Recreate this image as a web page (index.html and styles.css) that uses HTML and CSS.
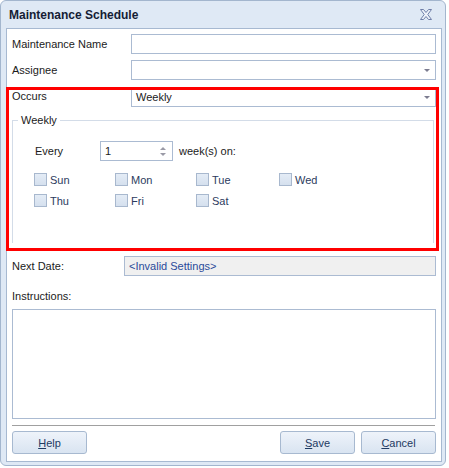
FILE: index.html
```
<html>
 <head>
 <meta content="width=device-width, initial-scale=1" name="viewport" />
  <link rel="stylesheet" href="styles.css">
 </head>
 <body>
 <div class="window">
  <div class="titlebar">
   <span class="title">Maintenance Schedule</span>
   <svg class="close" width="12" height="11" viewBox="0 0 12 11">
    <polygon points="0.5,0.5 3.5,0.5 6,3.5 8.5,0.5 11.5,0.5 7.8,5.5 11.5,10.5 8.5,10.5 6,7.5 3.5,10.5 0.5,10.5 4.2,5.5" fill="#eef2fa" stroke="#6f7fa8" stroke-width="1"/>
   </svg>
  </div>
  <div class="panel">
   <div class="row">
    <label>Maintenance Name</label>
    <div class="field"></div>
   </div>
   <div class="row">
    <label>Assignee</label>
    <div class="field combo"><span class="arrow"></span></div>
   </div>
   <div class="row occurs">
    <label>Occurs</label>
    <div class="field combo"><span class="val">Weekly</span><span class="arrow"></span></div>
   </div>
   <fieldset class="group">
    <legend>Weekly</legend>
    <div class="every">
     <label>Every</label>
     <div class="spin"><span class="val">1</span>
      <span class="spinbtn"><i class="up"></i><i class="down"></i></span></div>
     <span class="weeks">week(s) on:</span>
    </div>
    <div class="days">
     <div class="day"><span class="box"></span>Sun</div>
     <div class="day"><span class="box"></span>Mon</div>
     <div class="day"><span class="box"></span>Tue</div>
     <div class="day"><span class="box"></span>Wed</div>
     <div class="day"><span class="box"></span>Thu</div>
     <div class="day"><span class="box"></span>Fri</div>
     <div class="day"><span class="box"></span>Sat</div>
    </div>
   </fieldset>
   <div class="row next">
    <label>Next Date:</label>
    <div class="field readonly"><span class="val">&lt;Invalid Settings&gt;</span></div>
   </div>
   <div class="inslabel">Instructions:</div>
   <div class="notes"></div>
   <div class="sep"></div>
   <div class="buttons">
    <button><u>H</u>elp</button>
    <span class="spacer"></span>
    <button><u>S</u>ave</button>
    <button><u>C</u>ancel</button>
   </div>
  </div>
  <div class="mark"></div>
 </div>
 </body>
</html>
```
FILE: styles.css
```
body{
  margin:0;
  padding:0;
  background-color: #fff;
  font-family: "Liberation Sans", Arial, sans-serif;
  font-size: 11px;
  color: #1b1b1b;
}
.window{
  position: relative;
  width: 446px;
  height: 466px;
  box-sizing: border-box;
  border: 1px solid #a3b6ce;
  border-radius: 6px;
  background-color: #dfe9f5;
  padding: 0 3px 4px 5px;
}
.titlebar{
  height: 27px;
  display: flex;
  align-items: center;
  padding-left: 3px;
}
.title{
  flex: 1;
  font-weight: bold;
  font-size: 12px;
  color: #151d35;
}
.close{
  margin-right: 10px;
}
.panel{
  height: 434px;
  box-sizing: border-box;
  border: 1px solid #a7b9d1;
  background-color: #fff;
  padding: 5px 5px 0 5px;
}
.row{
  display: flex;
  align-items: center;
  height: 20px;
  margin-bottom: 6px;
}
.row label{
  width: 119px;
}
.field{
  flex: 1;
  height: 20px;
  box-sizing: border-box;
  border: 1px solid #abbbd2;
  background-color: #fff;
  display: flex;
  align-items: center;
  padding-left: 4px;
}
.combo .val{
  flex: 1;
}
.combo .arrow{
  margin-left: auto;
  margin-right: 5px;
  width: 0;
  height: 0;
  border-left: 3px solid transparent;
  border-right: 3px solid transparent;
  border-top: 3px solid #7c7c90;
}
.occurs{
  margin-top: 7px;
  align-items: flex-start;
}
.occurs label{
  line-height: 18px;
}
.group{
  margin: 7px 2px 0 0;
  padding: 0 0 0 22px;
  height: 128px;
  border: 1px solid #d3dce8;
  border-bottom: none;
}
.group legend{
  padding: 0 3px;
  margin-left: -17px;
  font-size: 11px;
  line-height: 13px;
}
.every{
  display: flex;
  align-items: center;
  margin-top: 14px;
}
.every label{
  width: 65px;
}
.spin{
  width: 73px;
  height: 20px;
  box-sizing: border-box;
  border: 1px solid #abbbd2;
  display: flex;
  align-items: center;
  padding-left: 4px;
}
.spin .val{
  flex: 1;
}
.spinbtn{
  display: flex;
  flex-direction: column;
  gap: 3px;
  margin-right: 6px;
}
.spinbtn i{
  width: 0;
  height: 0;
  border-left: 3px solid transparent;
  border-right: 3px solid transparent;
}
.spinbtn .up{
  border-bottom: 3px solid #9a9aa6;
}
.spinbtn .down{
  border-top: 3px solid #9a9aa6;
}
.weeks{
  margin-left: 6px;
}
.days{
  display: grid;
  grid-template-columns: 81px 81px 83px auto;
  row-gap: 8px;
  margin: 12px 0 0 -1px;
}
.day{
  display: flex;
  align-items: center;
  height: 13px;
  color: #2c3b5e;
}
.box{
  width: 13px;
  height: 13px;
  box-sizing: border-box;
  border: 1px solid #a8b8ce;
  background: linear-gradient(#e4ecf6, #d5e0ee);
  margin-right: 3px;
}
.next{
  margin-top: 13px;
}
.next label{
  width: 112px;
}
.readonly{
  background-color: #f0f0f0;
  color: #2a4a9a;
}
.inslabel{
  height: 13px;
  line-height: 13px;
  margin-top: 14px;
}
.notes{
  margin-top: 6px;
  height: 110px;
  box-sizing: border-box;
  border: 1px solid #abbbd2;
}
.sep{
  height: 1px;
  margin: 6px 1px 0 0;
  background-color: #a0a0a0;
}
.buttons{
  display: flex;
  gap: 6px;
  margin-top: 5px;
}
.spacer{
  flex: 1;
}
button{
  width: 75px;
  height: 23px;
  border: 1px solid #a7b9d0;
  border-radius: 3px;
  background: linear-gradient(#eef3fa, #d9e4f1);
  font-family: "Liberation Sans", Arial, sans-serif;
  font-size: 11px;
  color: #1e3a62;
  padding: 0;
}
.mark{
  position: absolute;
  left: 5px;
  top: 86px;
  width: 433px;
  height: 164px;
  box-sizing: border-box;
  border: 3px solid #ff0000;
}
```
